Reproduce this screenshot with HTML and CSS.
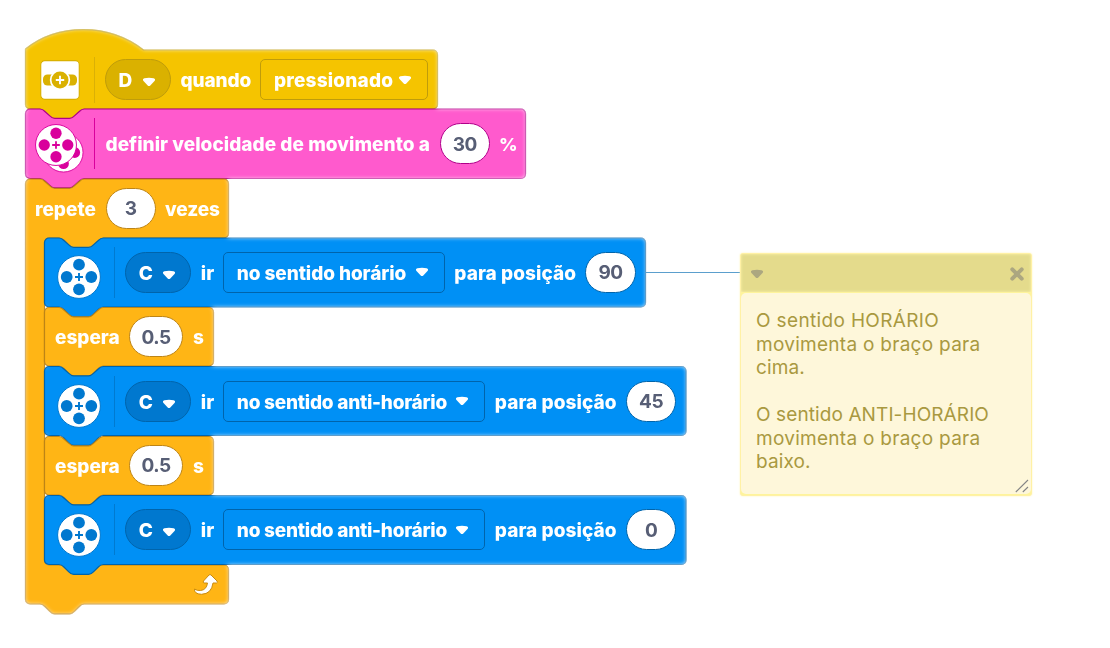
FILE: index.html
```html
<!DOCTYPE html>
<html lang="pt">
<head>
<meta charset="utf-8">
<title>Blocos</title>
<link rel="stylesheet" href="styles.css">
</head>
<body>
<svg class="defs" width="0" height="0" aria-hidden="true">
  <defs>
    <filter id="edge-glow" x="-2%" y="-2%" width="104%" height="104%" color-interpolation-filters="sRGB">
      <feComponentTransfer in="SourceAlpha" result="outside"><feFuncA type="linear" slope="-1" intercept="1"/></feComponentTransfer>
      <feGaussianBlur in="outside" stdDeviation="2" result="soft"/>
      <feFlood flood-color="#fff" flood-opacity=".9"/>
      <feComposite in2="soft" operator="in"/>
      <feComposite in2="SourceAlpha" operator="in" result="glow"/>
      <feMerge><feMergeNode in="SourceGraphic"/><feMergeNode in="glow"/></feMerge>
    </filter>
    <symbol id="caret" viewBox="0 0 14 10"><path d="M2.4 1.2Q7 .2 11.6 1.2Q14 2 12.500 4L8.300 8.400Q7 9.500 5.700 8.400L1.500 4Q0 2 2.400 1.200Z"/></symbol>
    <symbol id="wheel" viewBox="0 0 46 46">
      <circle cx="23" cy="23" r="21.400" fill="#fff" stroke="currentColor" stroke-width="1"/>
      <g fill="currentColor"><circle cx="23" cy="10.700" r="5.900"/><circle cx="23" cy="35.300" r="5.900"/><circle cx="10.700" cy="23" r="5.900"/><circle cx="35.300" cy="23" r="5.900"/></g>
      <path d="M23 19v8M19 23h8" stroke="currentColor" stroke-width="1.900"/>
    </symbol>
  </defs>
</svg>
<main class="workspace">
  <section class="stack">
    <div class="block hat gold">
      <svg class="shape" width="415" height="92" viewBox="0 -22 415 92"><path d="M.5 -1C33 -27 84 -27 118.500 0H408a4.500 4.500 0 0 1 4.500 4.500V54.500a4.500 4.500 0 0 1 -4.500 4.500H59.200c-2.500 0-3.700 1.200-4.900 2.500l-4.900 4.900c-1.200 1.200-2.500 2.500-4.900 2.500h-14.800c-2.500 0-3.700-1.200-4.900-2.500l-4.900-4.900c-1.200-1.200-2.500-2.500-4.900-2.500H5a4.500 4.500 0 0 1 -4.500-4.500Z"/></svg>
      <svg class="sensor" width="40" height="40" viewBox="0 0 40 40"><rect x=".7" y=".7" width="38.600" height="38.600" rx="4" fill="#fff" stroke="currentColor" stroke-width="1.200"/><rect x="3" y="14.500" width="14" height="11" rx="4.500" fill="currentColor"/><rect x="23" y="14.500" width="14" height="11" rx="4.500" fill="currentColor"/><circle cx="20" cy="20" r="10.200" fill="#fff"/><circle cx="20" cy="20" r="8.500" fill="currentColor"/><path d="M20 15.800v8.400M15.800 20h8.400" stroke="#fff" stroke-width="1.900"/></svg>
      <i class="rule"></i>
      <span class="pill port"><b>D</b><svg class="caret"><use href="#caret"/></svg></span>
      <span class="label quando">quando</span>
      <span class="menu m-press"><b class="pressionado">pressionado</b><svg class="caret"><use href="#caret"/></svg></span>
    </div>
    <div class="block motion pink">
      <svg class="shape" width="503" height="82" viewBox="0 0 503 82"><path d="M5 0H15c2.500 0 3.700 1.200 4.900 2.500l4.900 4.400c1.200 1.200 2.500 2.500 4.900 2.500h14.800c2.500 0 3.700-1.200 4.900-2.500l4.900-4.400c1.200-1.200 2.500-2.500 4.900-2.500H496a4.500 4.500 0 0 1 4.500 4.500V65a4.500 4.500 0 0 1 -4.500 4.500H59.200c-2.500 0-3.700 1.200-4.900 2.500l-4.900 4.400c-1.200 1.200-2.500 2.500-4.900 2.500h-14.800c-2.500 0-3.700-1.200-4.900-2.500l-4.900-4.400c-1.200-1.200-2.500-2.500-4.900-2.500H5a4.500 4.500 0 0 1 -4.500-4.500V4.500A4.500 4.500 0 0 1 5 0Z"/></svg>
      <svg class="pair" width="50" height="50" viewBox="0 0 50 50"><use href="#wheel" x="7.500" y="7.500" width="42" height="42"/><use href="#wheel" x="-1" y="-1" width="44" height="44"/></svg>
      <i class="rule"></i>
      <span class="label definir">definir velocidade de movimento a</span>
      <span class="value">30</span>
      <span class="label percent">%</span>
    </div>
    <div class="loop orange">
      <svg class="shape" width="206" height="437" viewBox="0 0 206 437"><path d="M5 0H15c2.500 0 3.700 1.200 4.900 2.500l4.900 4.400c1.200 1.200 2.500 2.500 4.900 2.500h14.800c2.500 0 3.700-1.200 4.900-2.500l4.900-4.400c1.200-1.200 2.500-2.500 4.900-2.500H199a4.500 4.500 0 0 1 4.500 4.500V54.500a4.500 4.500 0 0 1 -4.500 4.500H78.700c-2.500 0-3.700 1.200-4.900 2.500l-4.900 4.900c-1.200 1.200-2.500 2.500-4.900 2.500h-14.800c-2.500 0-3.700-1.200-4.900-2.500l-4.900-4.900c-1.200-1.200-2.500-2.500-4.900-2.500H24a4.500 4.500 0 0 0 -4.500 4.500V381.500a4.500 4.500 0 0 0 4.500 4.500H199a4.500 4.500 0 0 1 4.500 4.500V420.500a4.500 4.500 0 0 1 -4.500 4.500H59.200c-2.500 0-3.700 1.200-4.900 2.500l-4.900 4.900c-1.200 1.200-2.500 2.500-4.900 2.500h-14.800c-2.500 0-3.700-1.200-4.900-2.500l-4.900-4.900c-1.200-1.200-2.500-2.500-4.900-2.500H5a4.500 4.500 0 0 1 -4.500-4.500V4.500A4.500 4.500 0 0 1 5 0Z"/></svg>
      <div class="block head"><span class="label repete">repete</span><span class="value v3">3</span><span class="label vezes">vezes</span></div>
      <div class="body">
        <div class="block motion blue">
          <svg class="shape" width="604" height="82" viewBox="0 0 604 82"><path d="M5 0H15c2.500 0 3.700 1.200 4.900 2.500l4.900 4.400c1.200 1.200 2.500 2.500 4.900 2.500h14.800c2.500 0 3.700-1.200 4.900-2.500l4.900-4.400c1.200-1.200 2.500-2.500 4.900-2.500H597a4.500 4.500 0 0 1 4.500 4.500V64.500a4.500 4.500 0 0 1 -4.500 4.500H59.200c-2.500 0-3.700 1.200-4.900 2.500l-4.900 4.900c-1.200 1.200-2.500 2.500-4.900 2.500h-14.800c-2.500 0-3.700-1.200-4.900-2.500l-4.900-4.900c-1.200-1.200-2.500-2.500-4.900-2.500H5a4.500 4.500 0 0 1 -4.500-4.500V4.500A4.500 4.500 0 0 1 5 0Z"/></svg>
          <svg class="wheel"><use href="#wheel"/></svg><i class="rule"></i>
          <span class="pill port"><b>C</b><svg class="caret"><use href="#caret"/></svg></span>
          <span class="label ir">ir</span>
          <span class="menu m-cw"><b class="cw">no sentido horário</b><svg class="caret"><use href="#caret"/></svg></span>
          <span class="label para">para posição</span><span class="value">90</span>
        </div>
        <div class="block wait">
          <svg class="shape" width="171" height="71" viewBox="0 0 171 71"><path d="M5 .5H15c2.500 0 3.700 1.200 4.900 2.500l4.900 4.400c1.200 1.200 2.500 2.500 4.900 2.500h14.800c2.500 0 3.700-1.200 4.900-2.500l4.900-4.400c1.200-1.200 2.500-2.500 4.900-2.500H165a4.500 4.500 0 0 1 4.500 4.500V54.500a4.500 4.500 0 0 1 -4.500 4.500H59.200c-2.500 0-3.700 1.200-4.900 2.500l-4.900 4.900c-1.200 1.200-2.500 2.500-4.900 2.500h-14.800c-2.500 0-3.700-1.200-4.900-2.500l-4.900-4.900c-1.200-1.200-2.500-2.500-4.900-2.500H5a4.500 4.500 0 0 1 -4.500-4.500V5A4.500 4.500 0 0 1 5 .5Z"/></svg>
          <span class="label espera">espera</span><span class="value v05">0.5</span><span class="label">s</span>
        </div>
        <div class="block motion blue wide">
          <svg class="shape" width="645" height="82" viewBox="0 0 645 82"><path d="M5 .5H15c2.500 0 3.700 1.200 4.900 2.500l4.900 4.400c1.200 1.200 2.500 2.500 4.900 2.500h14.800c2.500 0 3.700-1.200 4.900-2.500l4.900-4.400c1.200-1.200 2.500-2.500 4.900-2.500H637.500a4.500 4.500 0 0 1 4.500 4.500V65a4.500 4.500 0 0 1 -4.500 4.500H59.200c-2.500 0-3.700 1.200-4.900 2.500l-4.900 4.900c-1.200 1.200-2.500 2.500-4.900 2.500h-14.800c-2.500 0-3.700-1.200-4.900-2.500l-4.900-4.900c-1.200-1.200-2.500-2.500-4.900-2.500H5a4.500 4.500 0 0 1 -4.500-4.500V5A4.500 4.500 0 0 1 5 .5Z"/></svg>
          <svg class="wheel"><use href="#wheel"/></svg><i class="rule"></i>
          <span class="pill port"><b>C</b><svg class="caret"><use href="#caret"/></svg></span>
          <span class="label ir">ir</span>
          <span class="menu m-ccw"><b class="ccw">no sentido anti-horário</b><svg class="caret"><use href="#caret"/></svg></span>
          <span class="label para">para posição</span><span class="value">45</span>
        </div>
        <div class="block wait">
          <svg class="shape" width="171" height="71" viewBox="0 0 171 71"><path d="M5 .5H15c2.500 0 3.700 1.200 4.900 2.500l4.900 4.400c1.200 1.200 2.500 2.500 4.900 2.500h14.800c2.500 0 3.700-1.200 4.900-2.500l4.900-4.400c1.200-1.200 2.500-2.500 4.900-2.500H165a4.500 4.500 0 0 1 4.500 4.500V54.500a4.500 4.500 0 0 1 -4.500 4.500H59.200c-2.500 0-3.700 1.200-4.900 2.500l-4.900 4.900c-1.200 1.200-2.500 2.500-4.900 2.500h-14.800c-2.500 0-3.700-1.200-4.900-2.500l-4.900-4.900c-1.200-1.200-2.500-2.500-4.900-2.500H5a4.500 4.500 0 0 1 -4.500-4.500V5A4.500 4.500 0 0 1 5 .5Z"/></svg>
          <span class="label espera">espera</span><span class="value v05">0.5</span><span class="label">s</span>
        </div>
        <div class="block motion blue wide">
          <svg class="shape" width="645" height="82" viewBox="0 0 645 82"><path d="M5 .5H15c2.500 0 3.700 1.200 4.900 2.500l4.900 4.400c1.200 1.200 2.500 2.500 4.900 2.500h14.800c2.500 0 3.700-1.200 4.900-2.500l4.900-4.400c1.200-1.200 2.500-2.500 4.900-2.500H637.500a4.500 4.500 0 0 1 4.500 4.500V65a4.500 4.500 0 0 1 -4.500 4.500H59.200c-2.500 0-3.700 1.200-4.900 2.500l-4.900 4.900c-1.200 1.200-2.500 2.500-4.900 2.500h-14.800c-2.500 0-3.700-1.200-4.900-2.500l-4.900-4.900c-1.200-1.200-2.500-2.500-4.900-2.500H5a4.500 4.500 0 0 1 -4.500-4.500V5A4.500 4.500 0 0 1 5 .5Z"/></svg>
          <svg class="wheel"><use href="#wheel"/></svg><i class="rule"></i>
          <span class="pill port"><b>C</b><svg class="caret"><use href="#caret"/></svg></span>
          <span class="label ir">ir</span>
          <span class="menu m-ccw"><b class="ccw">no sentido anti-horário</b><svg class="caret"><use href="#caret"/></svg></span>
          <span class="label para">para posição</span><span class="value">0</span>
        </div>
      </div>
      <div class="foot"><svg width="26" height="24" viewBox="0 0 26 24"><path d="M1.500 16Q1 21 8.500 21.300Q18.500 21 20 10H23.500Q25 9.500 24 8L18 2Q17 1 16 2L10.500 8Q9.500 9.500 11 10H14.500Q13.500 17 7.500 17.500Q4 17.800 1.500 16Z" fill="#fff" stroke="#c98b10" stroke-width="1"/></svg></div>
    </div>
  </section>
  <i class="connector"></i>
  <aside class="note">
    <header class="note-bar"><svg class="caret"><use href="#caret"/></svg><svg width="16" height="16" viewBox="0 0 16 16"><path d="M3.300 3.300l9.400 9.400M12.700 3.300l-9.400 9.400" stroke="currentColor" stroke-width="4" stroke-linecap="round"/></svg></header>
    <div class="note-text">
      <p><span class="n1">O sentido HORÁRIO</span><br><span class="n2">movimenta o braço para</span><br><span class="n3">cima.</span></p>
      <p><span class="n4">O sentido ANTI-HORÁRIO</span><br><span class="n2">movimenta o braço para</span><br><span class="n3">baixo.</span></p>
      <svg class="grip" width="14" height="14" viewBox="0 0 14 14"><path d="M.8 13L13 1M7.800 13L13 8" stroke="#858585" stroke-width="1.100"/></svg>
    </div>
  </aside>
</main>
</body>
</html>
```
FILE: styles.css
```css
body { margin: 0; background: #fff; font-family: Inter, "Liberation Sans", sans-serif; }
.defs { position: absolute; }
.workspace { display: flex; align-items: flex-start; width: 1110px; height: 648px; overflow: hidden; }
.stack { width: 663px; flex: none; margin: 50px 0 0 24.500px; filter: url(#edge-glow); color: #fff; font-size: 19px; font-weight: 700; line-height: 24px; }
.block { position: relative; display: flex; align-items: center; box-sizing: border-box; height: 59px; white-space: nowrap; }
.block > * { flex: none; position: relative; }
.stack .shape { position: absolute; left: 0; top: 0; overflow: visible; fill: var(--fill); stroke: var(--line); stroke-width: 1.200; }
.stack .hat .shape { top: -22px; }
.gold { --fill: #f5c400; --line: #bf9c0b; --field: #dab100; }
.pink { --fill: #ff5acd; --line: #b00089; --field: #d9009c; }
.orange { --fill: #ffb515; --line: #bd8416; --field: #bd8416; }
.blue { --fill: #0090f5; --line: #0064ab; --field: #0078cf; }
.hat { padding-left: 15px; }
.sensor, .pair, .wheel { color: var(--field); }
.pair { margin: 10px 0 0 10.500px; overflow: visible; }
.pink, .blue { height: 69.500px; }
.wheel { width: 46px; height: 46px; margin: 9.500px 0 0 12.300px; }
.rule { width: 1px; height: 51px; margin: 0 10px; background: var(--line); opacity: .5; }
.hat .rule { height: 46px; margin: 0 10px 0 14px; }
.pink .rule { background: var(--field); opacity: 1; margin: 0 11px 0 8.500px; }
.blue .rule { margin-left: 11.500px; }
.label { margin-right: 10px; padding-top: 3px; font-weight: 800; }
b { padding-top: 3px; font-weight: 800; }
.caret { width: 14px; height: 10px; fill: currentColor; }
.pill, .menu, .value { display: flex; align-items: center; box-sizing: border-box; height: 41px; border: 1.200px solid var(--line); }
.pill { width: 66px; margin-right: 10px; padding: 0 14px 0 13px; justify-content: space-between; border-radius: 21px; background: var(--field); }
.pill .caret { margin-top: 5px; }
.menu { margin-right: 9.500px; padding: 0 15px 0 13px; justify-content: space-between; border-radius: 5px; }
.value { width: 50.500px; margin-right: 10px; padding-top: 2px; justify-content: center; border-radius: 21px; background: #fff; color: #575e75; letter-spacing: -.5px; }
.quando { width: 69.500px; letter-spacing: -.1px; }
.pressionado { letter-spacing: .2px; }
.m-press { width: 168px; }
.definir { width: 324px; letter-spacing: .04px; }
.percent { font-size: 18px; margin-left: -1px; }
.repete { width: 60.500px; }
.vezes { width: 54px; letter-spacing: -.1px; margin-left: -1px; }
.ir { width: 11px; }
.m-cw { width: 222px; margin-left: 1px; }
.m-ccw { width: 262.500px; margin-left: 1px; }
.cw { letter-spacing: -.08px; }
.ccw { letter-spacing: -.24px; }
.para { width: 121px; letter-spacing: .06px; }
.espera { width: 64px; }
.v05 { width: 54px; }
.loop { position: relative; height: 426px; }
.head { padding-left: 10.500px; }
.body { margin-left: 19.500px; }
.wait { padding-left: 11px; height: 59.300px; }
.foot { display: flex; justify-content: flex-end; position: relative; width: 194px; padding-top: 8px; }
.connector { width: 94px; height: 1px; margin: 272px 0 0 -41.500px; background: #5b9fcd; flex: none; }
.wide { width: 643px; }
.note { width: 292px; height: 243px; margin-top: 253px; flex: none; box-sizing: border-box; border: 1px solid #fff1a5; border-radius: 3px; background: #fef49c; color: #a99940; font-size: 19px; line-height: 23.500px; box-shadow: 0 0 2px #fff3ae; }
.note-bar { display: flex; justify-content: space-between; align-items: center; height: 38px; padding: 2px 6px 0 9px; box-sizing: border-box; background: #e4db8c; color: #aca780; box-shadow: inset 0 0 3px #fff4ae; }
.note-text { position: relative; height: 201px; margin-top: 1px; padding: 16px 15px; box-sizing: border-box; border-radius: 5px; background: #fef7da; white-space: nowrap; }
.note-text p { margin: 0 0 23.500px; }
.n1 { letter-spacing: .35px; }
.n2 { letter-spacing: .28px; }
.n3 { letter-spacing: .1px; }
.n4 { letter-spacing: .1px; }
.grip { position: absolute; right: 2px; bottom: 1px; }
```
